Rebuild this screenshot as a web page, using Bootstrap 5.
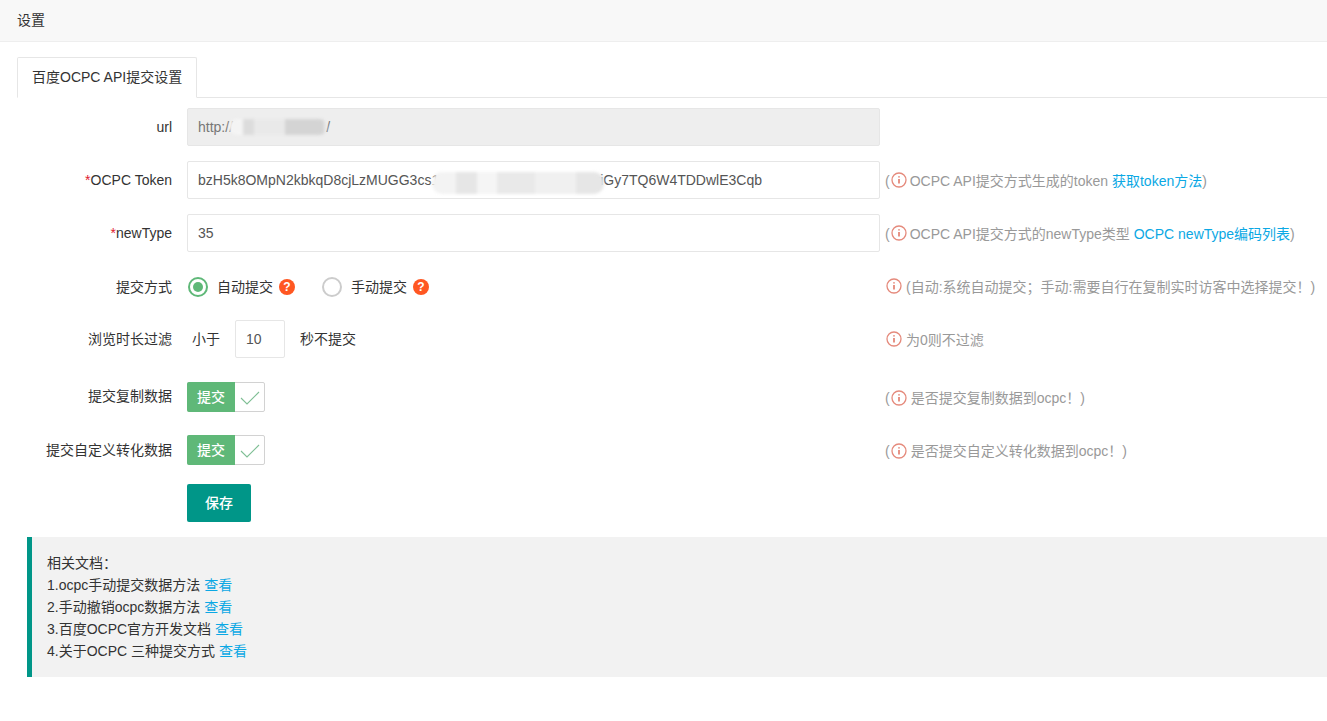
<!doctype html>
<html lang="zh-CN">
<head>
<meta charset="utf-8">
<title>设置</title>
<link rel="stylesheet" href="https://cdn.jsdelivr.net/npm/bootstrap@5.3.0/dist/css/bootstrap.min.css">
<style>
html,body{height:100%;}
body{font-family:"Liberation Sans","Noto Sans CJK SC",sans-serif;font-size:14px;color:#333;background:#fff;overflow:hidden;}
a{color:#0ba8e4;text-decoration:none;}
.page-head{height:42px;background:#f8f8f8;border-bottom:1px solid #eee;padding-left:17px;line-height:41px;}
.page-body{padding:15px 0 0 17px;}
.nav-tabs.tab-bar{--bs-nav-tabs-border-color:#e6e6e6;--bs-nav-tabs-border-radius:2px;height:41px;border-bottom:1px solid #e6e6e6;}
.tab-bar .nav-link{height:41px;padding:0 14px;line-height:39px;color:#333;font-size:14px;--bs-nav-tabs-link-active-color:#333;--bs-nav-tabs-link-active-border-color:#e6e6e6 #e6e6e6 #fff;}
.form-rows{padding-top:10px;}
.form-line{display:flex;align-items:center;height:38px;margin-bottom:15px;}
.line-label{width:155px;flex:none;text-align:right;}
.line-label.nudge{margin-top:2px;}
.req{color:#e0202f;}
.line-main{width:693px;flex:none;margin-left:15px;display:flex;align-items:center;position:relative;}
.line-main.nudge{margin-top:2px;}
.line-input.form-control{height:38px;border-radius:2px;border:1px solid #e6e6e6;font-size:14px;color:#555;padding:0 10px;box-shadow:none;}
.line-input.form-control[readonly]{background:#eee;color:#777;}
.line-input.num{width:50px;flex:none;margin:0 15px;}
.line-help{margin-left:5px;margin-top:2px;color:#999;white-space:nowrap;display:flex;align-items:center;}
.line-help svg{flex:none;margin:0 4px 2px 1px;}
.line-help.tight svg{margin-right:3px;}
.line-help.low{margin-top:13px;}
.blur-a,.blur-b{position:absolute;filter:blur(1.5px);}
.blur-a{left:42px;top:11px;width:98px;height:16px;background:linear-gradient(90deg,#f4f4f4 0 14%,#dcdcdc 14% 26%,#e9e9e9 26% 57%,#d4d4d4 57% 97%,#e8e8e8 97%);border-radius:8px;}
.blur-b{left:245px;top:11px;width:172px;height:22px;background:linear-gradient(90deg,#f3f3f3 0 14%,#e6e6e6 14% 26%,#f5f5f5 26% 38%,#e9e9e9 38% 60%,#f0f0f0 60% 84%,#e6e6e6 84%);border-radius:10px;}
.radio-dot{width:20px;height:20px;border-radius:50%;border:2px solid #ccc;flex:none;display:flex;align-items:center;justify-content:center;margin-right:9px;}
.radio-dot.on{border-color:#5fb878;margin-left:1px;}
.radio-dot.on::after{content:"";width:10px;height:10px;border-radius:50%;background:#5fb878;}
.q-mark{width:16px;height:16px;border-radius:50%;background:#ff5722;color:#fff;font-size:12px;font-weight:700;line-height:16px;text-align:center;flex:none;margin-left:6px;}
.q-mark.gap-after{margin-right:27px;}
.lead-in{padding-left:5px;}
.switch-box{display:flex;width:78px;height:30px;border:1px solid #d2d2d2;border-radius:2px;background:#fff;margin-top:9px;}
.switch-box span{width:48px;margin:-1px 0 -1px -1px;background:#5fb878;color:#fff;border-radius:2px 0 0 2px;text-align:center;line-height:30px;font-weight:500;}
.switch-box svg{margin:4px 0 0 4px;}
.shift9{margin-top:9px;}
.shift11{margin-top:11px;}
.btn.btn-save{width:64px;height:38px;padding:0;background:#009688;border:0;border-radius:2px;color:#fff;font-size:14px;font-weight:500;}
.save-line{margin-top:20px;margin-bottom:0;}
.doc-note{margin:15px 0 0 10px;background:#f2f2f2;border-left:5px solid #009688;padding:15px;line-height:22px;}
</style>
</head>
<body>
<div class="page-head">设置</div>
<div class="page-body">
  <ul class="nav nav-tabs tab-bar">
    <li class="nav-item"><a class="nav-link active" href="#">百度OCPC API提交设置</a></li>
  </ul>
  <div class="form-rows">
    <div class="form-line">
      <div class="line-label">url</div>
      <div class="line-main"><input class="form-control line-input" readonly value="http://                        /"><div class="blur-a"></div></div>
    </div>
    <div class="form-line">
      <div class="line-label"><span class="req">*</span>OCPC Token</div>
      <div class="line-main"><input class="form-control line-input" value="bzH5k8OMpN2kbkqD8cjLzMUGG3cs1xxxxxxxxxxxxxxxxxxxxxxxiGy7TQ6W4TDDwlE3Cqb"><div class="blur-b"></div></div>
      <div class="line-help tight">(<svg width="16" height="16" viewBox="0 0 16 16"><circle cx="8" cy="8" r="7" fill="none" stroke="#e58a7c" stroke-width="1.3"/><path d="M8 4.2v1.4M8 7v4.6" stroke="#e0705f" stroke-width="1.5"/></svg>OCPC API提交方式生成的token&nbsp;<a href="#">获取token方法</a>)</div>
    </div>
    <div class="form-line">
      <div class="line-label"><span class="req">*</span>newType</div>
      <div class="line-main"><input class="form-control line-input" value="35"></div>
      <div class="line-help tight">(<svg width="16" height="16" viewBox="0 0 16 16"><circle cx="8" cy="8" r="7" fill="none" stroke="#e58a7c" stroke-width="1.3"/><path d="M8 4.2v1.4M8 7v4.6" stroke="#e0705f" stroke-width="1.5"/></svg>OCPC API提交方式的newType类型&nbsp;<a href="#">OCPC newType编码列表</a>)</div>
    </div>
    <div class="form-line">
      <div class="line-label nudge">提交方式</div>
      <div class="line-main nudge">
        <span class="radio-dot on"></span><span>自动提交</span><span class="q-mark gap-after">?</span>
        <span class="radio-dot"></span><span>手动提交</span><span class="q-mark">?</span>
      </div>
      <div class="line-help">
        <svg width="16" height="16" viewBox="0 0 16 16"><circle cx="8" cy="8" r="7" fill="none" stroke="#e58a7c" stroke-width="1.3"/><path d="M8 4.2v1.4M8 7v4.6" stroke="#e0705f" stroke-width="1.5"/></svg>(自动:系统自动提交；手动:需要自行在复制实时访客中选择提交！)</div>
    </div>
    <div class="form-line">
      <div class="line-label">浏览时长过滤</div>
      <div class="line-main"><span class="lead-in">小于</span><input class="form-control line-input num" value="10"><span>秒不提交</span></div>
      <div class="line-help"><svg width="16" height="16" viewBox="0 0 16 16"><circle cx="8" cy="8" r="7" fill="none" stroke="#e58a7c" stroke-width="1.3"/><path d="M8 4.2v1.4M8 7v4.6" stroke="#e0705f" stroke-width="1.5"/></svg>为0则不过滤</div>
    </div>
    <div class="form-line">
      <div class="line-label shift9">提交复制数据</div>
      <div class="line-main"><div class="switch-box"><span>提交</span><svg width="22" height="22" viewBox="0 0 22 22"><path d="M2 11l6 6L20 5" fill="none" stroke="#7fbf95" stroke-width="1.1"/></svg></div></div>
      <div class="line-help low">(<svg width="16" height="16" viewBox="0 0 16 16"><circle cx="8" cy="8" r="7" fill="none" stroke="#e58a7c" stroke-width="1.3"/><path d="M8 4.2v1.4M8 7v4.6" stroke="#e0705f" stroke-width="1.5"/></svg>是否提交复制数据到ocpc！)</div>
    </div>
    <div class="form-line">
      <div class="line-label shift11">提交自定义转化数据</div>
      <div class="line-main"><div class="switch-box"><span>提交</span><svg width="22" height="22" viewBox="0 0 22 22"><path d="M2 11l6 6L20 5" fill="none" stroke="#7fbf95" stroke-width="1.1"/></svg></div></div>
      <div class="line-help low">(<svg width="16" height="16" viewBox="0 0 16 16"><circle cx="8" cy="8" r="7" fill="none" stroke="#e58a7c" stroke-width="1.3"/><path d="M8 4.2v1.4M8 7v4.6" stroke="#e0705f" stroke-width="1.5"/></svg>是否提交自定义转化数据到ocpc！)</div>
    </div>
    <div class="form-line save-line">
      <div class="line-label"></div>
      <div class="line-main"><button class="btn btn-save" type="button">保存</button></div>
    </div>
  </div>
  <div class="doc-note">
    相关文档：<br>
    1.ocpc手动提交数据方法 <a href="#">查看</a><br>
    2.手动撤销ocpc数据方法 <a href="#">查看</a><br>
    3.百度OCPC官方开发文档 <a href="#">查看</a><br>
    4.关于OCPC 三种提交方式 <a href="#">查看</a>
  </div>
</div>
<script src="https://cdn.jsdelivr.net/npm/bootstrap@5.3.0/dist/js/bootstrap.bundle.min.js"></script>
</body>
</html>
